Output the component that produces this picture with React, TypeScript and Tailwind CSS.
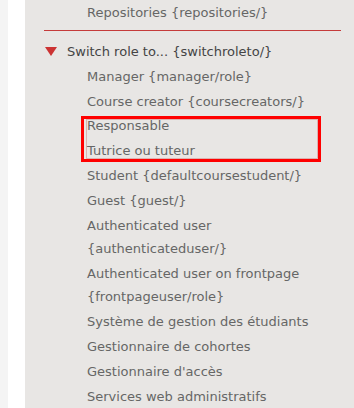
const roles = ["Manager {manager/role}", "Course creator {coursecreators/}"];

const highlighted = ["Responsable", "Tutrice ou tuteur"];

const moreRoles = [
  "Student {defaultcoursestudent/}",
  "Guest {guest/}",
  "Authenticated user {authenticateduser/}",
  "Authenticated user on frontpage {frontpageuser/role}",
  "Système de gestion des étudiants",
  "Gestionnaire de cohortes",
  "Gestionnaire d'accès",
  "Services web administratifs",
];

function Item({ label }: { label: string }) {
  return <div className="py-px leading-[23px]">{label}</div>;
}

export default function App() {
  return (
    <div className="flex h-[408px] w-[354px] overflow-hidden bg-[#f4f4f4] font-['DejaVu_Sans',sans-serif] text-[13px] text-[#666]">
      <div className="ml-[8px] w-[17px] shrink-0 bg-white" />
      <div className="flex-1 bg-[#e8e6e4] pl-[19px] pr-[13px]">
        <div className="-mt-[1px] pl-[43px] leading-[28px]">Repositories {"{repositories/}"}</div>
        <div className="mt-[3px] h-px bg-[#c53b3b]" />
        <div className="mt-[9px] flex items-center gap-[10px] pl-[1px] leading-[23px] text-[#444]">
          <svg width="12" height="9" viewBox="0 0 12 9" className="shrink-0">
            <path d="M0 0H12L6 9Z" fill="#cc3333" />
          </svg>
          <span>Switch role to... {"{switchroleto/}"}</span>
        </div>
        <div className="mt-[1px] pl-[43px]">
          {roles.map((r) => (
            <Item key={r} label={r} />
          ))}
          <div className="-ml-[6px] mt-[2px] w-[240px] border-[3px] border-[#ff0000] pl-[2px]">
            <div className="h-[40px] border border-[#dcb2b0]">
              <div className="-mt-[7px]">
                {highlighted.map((r) => (
                  <div key={r} className="leading-[25px]">{r}</div>
                ))}
              </div>
            </div>
          </div>
          <div className="mt-[1px]">
            {moreRoles.map((r) => (
              <Item key={r} label={r} />
            ))}
          </div>
        </div>
      </div>
    </div>
  );
}
